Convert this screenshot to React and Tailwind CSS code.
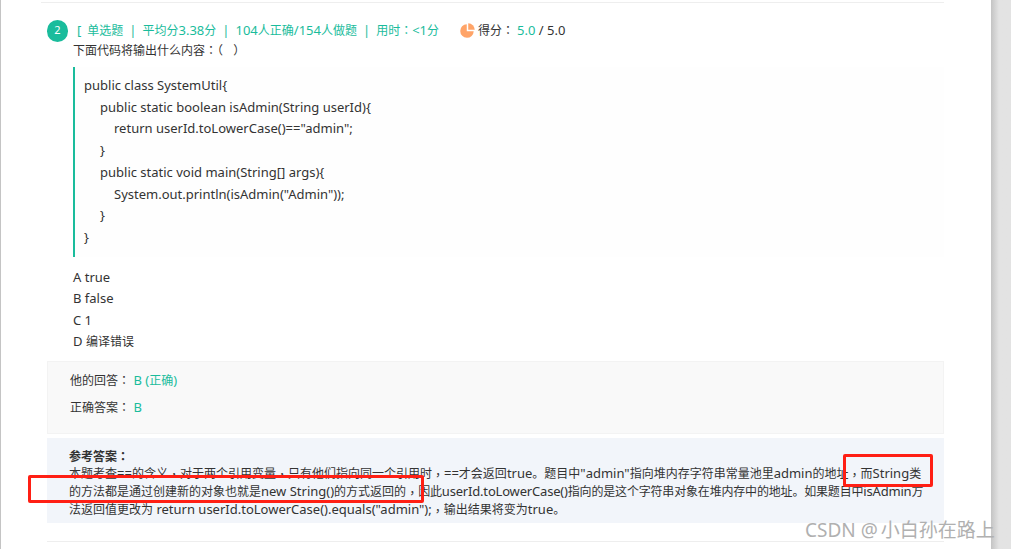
const font = { fontFamily: '"Noto Sans", "Noto Sans CJK SC", sans-serif' };

const codeLines = [
  ['pl-0', 'public class SystemUtil{'],
  ['pl-4', 'public static boolean isAdmin(String userId){'],
  ['pl-[30px]', 'return userId.toLowerCase()=="admin";'],
  ['pl-4', '}'],
  ['pl-4', 'public static void main(String[] args){'],
  ['pl-[30px]', 'System.out.println(isAdmin("Admin"));'],
  ['pl-4', '}'],
  ['pl-0', '}'],
];

const options = ['A true', 'B false', 'C 1', 'D 编译错误'];
const meta = ['[', '单选题', '|', '平均分3.38分', '|', '104人正确/154人做题', '|', '用时：<1分'];

// the page's latin text runs a size above its chinese text, and its punctuation sits centred
const Zh = ({ children }) => {
  const parts = children.split(/([，：（）]|[\u4e00-\u9fff。]+)/).filter(Boolean);
  return parts.map((p, i) => {
    if (p === '，') return <span key={i} className="align-[-2px] font-['Noto_Sans_CJK_TC'] text-xs">{p}</span>;
    if (/^[：（）]$/.test(p)) return <span key={i} className="font-['Noto_Sans_CJK_TC'] text-xs">{p}</span>;
    if (/^[\u4e00-\u9fff。]/.test(p)) return <span key={i} className="text-xs">{p}</span>;
    return <span key={i}>{p}</span>;
  });
};

const App = () => {
  return (
    <div style={font} className="relative flex h-[549px] w-[1011px] overflow-hidden bg-[#e3e3e3] text-[13px] text-[#333]">
      <div className="h-full w-[1px] shrink-0 bg-[#c4c4c4]" />
      <div className="flex h-full w-[990px] shrink-0 flex-col bg-white pl-[40px] pt-[2px]">
        <div className="h-[1px] w-[903px] bg-[#eeeeee]" />
        <div className="flex flex-col pl-[6px] pt-[17px]">
          <div className="flex h-[21px] items-center gap-[9px]">
            <div className="flex h-[22px] w-[21px] items-center justify-center rounded-full bg-[#1abc9c] text-[11px] text-white">2</div>
            <div className="flex items-center gap-[6px] whitespace-pre text-[#1abc9c]">
              {meta.map((m, i) => <span key={i}><Zh>{m}</Zh></span>)}
            </div>
            <div className="flex items-center gap-[3px] whitespace-pre pl-[12px]">
              <svg width="15" height="15" viewBox="0 0 14 14">
                <path d="M6.3 1.2A6.3 6.3 0 1 0 12.8 7.7H6.3Z" fill="#ffa468" />
                <path d="M7.7 0.2A6.3 6.3 0 0 1 13.8 6.3H7.7Z" fill="#ffa468" />
              </svg>
              <span><Zh>得分：</Zh></span>
              <span><span className="text-[#1abc9c]">5.0</span> / 5.0</span>
            </div>
          </div>
          <div className="flex flex-col gap-[8px] pl-[26px]">
            <div className="h-[18px] whitespace-pre leading-[18px]"><Zh>{'下面代码将输出什么内容：（   ）'}</Zh></div>
            <div className="h-[190px] w-[871px] border-l-2 border-[#1abc9c] bg-[#fefefe] pb-[2px] pl-[9px] pt-[8px] leading-[21.7px]">
              {codeLines.map(([indent, text], i) => (
                <div key={i} className={indent}>{text}</div>
              ))}
            </div>
            <div className="pt-[2px] leading-[21.3px]">
              {options.map(o => <div key={o}><Zh>{o}</Zh></div>)}
            </div>
          </div>
          <div className="flex w-[897px] flex-col gap-[4px] pt-[9px]">
            <div className="flex h-[73px] flex-col gap-[9px] border border-[#f3f3f3] bg-[#f9f9f9] pl-[22px] pt-[9px] leading-[18px]">
              <div><Zh>他的回答：</Zh> <span className="text-[#1abc9c]"><Zh>B (正确)</Zh></span></div>
              <div><Zh>正确答案：</Zh> <span className="text-[#1abc9c]">B</span></div>
            </div>
            <div className="h-[85px] whitespace-nowrap bg-[#f2f5fa] pl-[22px] pt-[10px] leading-[16.3px]">
              <div className="font-bold"><Zh>参考答案：</Zh></div>
              <div><Zh>{'本题考查==的含义，对于两个引用变量，只有他们指向同一个引用时，==才会返回true。题目中"admin"指向堆内存字符串常量池里admin的地址，而String类'}</Zh></div>
              <div>
                <Zh>{'的方法都是通过创建新的对象也就是new String()的方式返回的，'}</Zh>
                <span className="tracking-[-0.18px]"><Zh>{'因此userId.toLowerCase()指向的是这个字符串对象在堆内存中的地址。如果题目中isAdmin方'}</Zh></span>
              </div>
              <div><Zh>{'法返回值更改为 return userId.toLowerCase().equals("admin");，输出结果将变为true。'}</Zh></div>
            </div>
          </div>
          <div className="pt-[18px]">
            <div className="h-[1px] w-[897px] bg-[#eeeeee]" />
          </div>
        </div>
      </div>
      <div className="h-full w-[20px] shrink-0 bg-gradient-to-r from-[#c4c4c4] to-[#e3e3e3] to-40%" />

      {/* red marks drawn over the screenshot */}
      <div className="absolute left-[28px] top-[475px] h-[28px] w-[396px] rounded-[2px] border-[3px] border-[#ff1f14]" />
      <div className="absolute left-[843px] top-[454px] h-[33px] w-[90px] rounded-[2px] border-[3px] border-[#ff1f14]" />
      <div className="absolute left-[805px] top-[517px] whitespace-nowrap text-[19px] leading-[26px] text-[#b0b0b0]">CSDN @<span className="ml-[3px]">小白孙在路上</span></div>
    </div>
  );
};

export default App;
